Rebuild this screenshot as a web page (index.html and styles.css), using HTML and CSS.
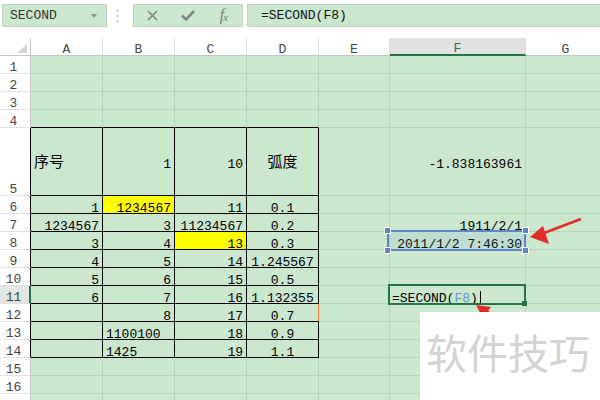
FILE: index.html
```html
<!DOCTYPE html>
<html lang="zh">
<head>
<meta charset="utf-8">
<title>SECOND</title>
<link rel="stylesheet" href="styles.css">
</head>
<body>
<div class="app">
  <div class="toolbar">
    <div class="namebox"><span>SECOND</span>
      <svg class="caretdown" width="6" height="4" viewBox="0 0 6 4"><path d="M0 0H6L3 4Z" fill="#8f8f8f"/></svg>
    </div>
    <div class="dots">
      <svg width="3" height="12" viewBox="0 0 3 12"><rect x="0.5" y="0" width="2" height="2" fill="#c4c4c4"/><rect x="0.5" y="5" width="2" height="2" fill="#c4c4c4"/><rect x="0.5" y="10" width="2" height="2" fill="#c4c4c4"/></svg>
    </div>
    <div class="btns">
      <span class="btn"><svg width="11" height="11" viewBox="0 0 11 11"><path d="M1 1L10 10M10 1L1 10" stroke="#858585" stroke-width="1.7" fill="none"/></svg></span>
      <span class="btn"><svg width="14" height="11" viewBox="0 0 14 11"><path d="M1 5.5L5 9.5L13 1" stroke="#858585" stroke-width="2.6" fill="none"/></svg></span>
      <span class="btn fx"><i>f</i><i class="sub">x</i></span>
    </div>
    <div class="fbar">=SECOND(F8)</div>
  </div>

  <div class="sheet">
    <div class="ch corner"><svg width="10" height="9" viewBox="0 0 10 9"><path d="M10 0V9H0Z" fill="#d6d6d6"/></svg></div>
    <div class="ch">A</div><div class="ch">B</div><div class="ch">C</div><div class="ch">D</div><div class="ch">E</div><div class="ch hl">F</div><div class="ch">G</div>

    <div class="rh">1</div><div class="c"></div><div class="c"></div><div class="c"></div><div class="c"></div><div class="c"></div><div class="c"></div><div class="c"></div>
    <div class="rh">2</div><div class="c"></div><div class="c"></div><div class="c"></div><div class="c"></div><div class="c"></div><div class="c"></div><div class="c"></div>
    <div class="rh">3</div><div class="c"></div><div class="c"></div><div class="c"></div><div class="c"></div><div class="c"></div><div class="c"></div><div class="c"></div>
    <div class="rh">4</div><div class="c tb"></div><div class="c tb"></div><div class="c tb"></div><div class="c tb"></div><div class="c"></div><div class="c"></div><div class="c"></div>

    <div class="rh tl">5</div><div class="c t tall l cjk">序号</div><div class="c t tall r">1</div><div class="c t tall r">10</div><div class="c t tall m cjk">弧度</div><div class="c tall"></div><div class="c tall r">-1.838163961</div><div class="c tall"></div>

    <div class="rh tl">6</div><div class="c t r">1</div><div class="c t r y">1234567</div><div class="c t r">11</div><div class="c t m">0.1</div><div class="c"></div><div class="c"></div><div class="c"></div>
    <div class="rh tl">7</div><div class="c t r">1234567</div><div class="c t r">3</div><div class="c t r">11234567</div><div class="c t m">0.2</div><div class="c"></div><div class="c r">1911/2/1</div><div class="c"></div>
    <div class="rh tl">8</div><div class="c t r">3</div><div class="c t r">4</div><div class="c t r y">13</div><div class="c t m">0.3</div><div class="c"></div><div class="c r">2011/1/2 7:46:30</div><div class="c"></div>
    <div class="rh tl">9</div><div class="c t r">4</div><div class="c t r">5</div><div class="c t r">14</div><div class="c t m">1.245567</div><div class="c"></div><div class="c"></div><div class="c"></div>
    <div class="rh tl">10</div><div class="c t r">5</div><div class="c t r">6</div><div class="c t r">15</div><div class="c t m">0.5</div><div class="c"></div><div class="c"></div><div class="c"></div>
    <div class="rh tl hl">11</div><div class="c t r">6</div><div class="c t r">7</div><div class="c t r">16</div><div class="c t m">1.132355</div><div class="c"></div><div class="c l edit">=SECOND(<span class="ref">F8</span>)<span class="caret"></span></div><div class="c"></div>
    <div class="rh tl">12</div><div class="c t"></div><div class="c t r">8</div><div class="c t r">17</div><div class="c t m mark">0.7</div><div class="c"></div><div class="c"></div><div class="c"></div>
    <div class="rh tl">13</div><div class="c t"></div><div class="c t l">1100100</div><div class="c t r">18</div><div class="c t m">0.9</div><div class="c"></div><div class="c"></div><div class="c"></div>
    <div class="rh tl">14</div><div class="c t"></div><div class="c t l">1425</div><div class="c t r">19</div><div class="c t m">1.1</div><div class="c"></div><div class="c"></div><div class="c"></div>

    <div class="rh">15</div><div class="c"></div><div class="c"></div><div class="c"></div><div class="c"></div><div class="c"></div><div class="c"></div><div class="c"></div>
    <div class="rh">16</div><div class="c"></div><div class="c"></div><div class="c"></div><div class="c"></div><div class="c"></div><div class="c"></div><div class="c"></div>
    <div class="rh">17</div><div class="c"></div><div class="c"></div><div class="c"></div><div class="c"></div><div class="c"></div><div class="c"></div><div class="c"></div>
  </div>

  <div class="selbox">
    <span class="hd h1"></span><span class="hd h2"></span><span class="hd h3"></span><span class="hd h4"></span>
  </div>
  <div class="editbox"><span class="fill"></span></div>

  <svg class="arrows" width="600" height="400" viewBox="0 0 600 400">
    <path d="M581 219L544 233" stroke="#e12b2b" stroke-width="2.6" fill="none"/>
    <path d="M530 237L543 226L549 244Z" fill="#e12b2b"/>
    <path d="M476 305L491 307L483 318Z" fill="#e12b2b"/>
    <path d="M486 311L520 332" stroke="#e12b2b" stroke-width="2.6" fill="none"/>
  </svg>

  <div class="watermark">软件技巧</div>
</div>
</body>
</html>
```

FILE: styles.css
```css
html, body {
  margin: 0;
  padding: 0;
  background: #ffffff;
}

body {
  font-family: "Liberation Mono", "DejaVu Sans Mono", monospace;
  font-size: 13px;
  color: #000;
  overflow: hidden;
}

.app {
  position: relative;
  width: 600px;
  height: 400px;
  overflow: hidden;
  background: #ffffff;
}

/* ---------- toolbar ---------- */
.toolbar {
  display: flex;
  align-items: center;
  height: 38px;
  box-sizing: border-box;
  padding: 4px 0 11px 2px;
}

.namebox {
  width: 105px;
  height: 23px;
  box-sizing: border-box;
  border: 1px solid #c4d2c6;
  background: #cbe8ce;
  display: flex;
  align-items: center;
  justify-content: space-between;
  padding: 0 9px 0 7px;
  color: #333;
}

.dots {
  width: 26px;
  height: 23px;
  display: flex;
  align-items: center;
  padding-left: 9px;
  box-sizing: border-box;
}

.btns {
  width: 110px;
  height: 23px;
  box-sizing: border-box;
  border: 1px solid #c4d2c6;
  background: #cbe8ce;
  display: flex;
  align-items: center;
}

.btn {
  width: 36px;
  height: 21px;
  display: flex;
  align-items: center;
  justify-content: center;
}

.fx {
  font-family: "Liberation Serif", serif;
  font-style: italic;
  color: #7c7c7c;
  font-size: 16px;
  line-height: 16px;
  padding-bottom: 2px;
  box-sizing: border-box;
}

.fx i { font-style: italic; }
.fx .sub { font-size: 11px; margin-top: 5px; margin-left: -1px; }

.fbar {
  flex: 1;
  height: 23px;
  box-sizing: border-box;
  margin-left: 4px;
  margin-right: -2px;
  border: 1px solid #c4d2c6;
  background: #cbe8ce;
  display: flex;
  align-items: center;
  padding-left: 13px;
  color: #111;
}

/* ---------- sheet grid ---------- */
.sheet {
  display: grid;
  grid-template-columns: 31px 72px 72px 72px 72px 71px 136px 80px;
  grid-template-rows: 18px 18px 18px 18px 18px 68px repeat(12, 18px);
}

.ch, .rh, .c {
  box-sizing: border-box;
  display: flex;
  white-space: nowrap;
  overflow: visible;
}

.ch {
  background: #ffffff;
  border-right: 1px solid #dcdcdc;
  border-bottom: 1px solid #c6c6c6;
  align-items: flex-end;
  justify-content: center;
  line-height: 11px;
  color: #444;
}

.ch.corner {
  justify-content: flex-end;
  align-items: flex-end;
  padding: 0 3px 2px 0;
  border-right-color: #c6c6c6;
}

.ch.hl {
  background: #e1e1e1;
  border-bottom: 2px solid #217346;
  color: #2f6844;
}

.rh {
  background: #ffffff;
  border-right: 1px solid #c6c6c6;
  border-bottom: 1px solid #e2e2e2;
  align-items: flex-end;
  justify-content: center;
  padding-right: 3px;
  line-height: 11px;
  color: #444;
}

.rh.tl { border-right-color: #000; }

.rh.hl {
  background: #e4e4e4;
  border-right: 2px solid #217346;
  padding-right: 2px;
  color: #2f4f3c;
}

.c {
  background: #cbe8ce;
  border-right: 1px solid #b7d3ba;
  border-bottom: 1px solid #b7d3ba;
  align-items: flex-end;
  line-height: 9px;
}

.c.tall {
  align-items: center;
  line-height: 17px;
  padding-top: 6px;
}

.c.cjk {
  font-family: "Noto Sans CJK SC", sans-serif;
  font-size: 15px;
  padding-top: 0;
  padding-bottom: 3px;
}

.c.t {
  border-right-color: #000;
  border-bottom-color: #000;
}

.c.tb { border-bottom-color: #000; }

.c.mark { border-right-color: #ef7a3c; }

.c.r { justify-content: flex-end; padding-right: 3px; }
.c.l { justify-content: flex-start; padding-left: 3px; }
.c.m { justify-content: center; }
.c.y { background: #ffff00; }

.c.edit { padding-left: 2px; }

.ref { color: #5f97cf; }

.caret {
  display: inline-block;
  width: 1px;
  height: 15px;
  background: #000;
  margin-left: 2px;
  margin-bottom: -3px;
}

/* ---------- overlays ---------- */
.selbox {
  position: absolute;
  left: 387px;
  top: 230px;
  width: 139px;
  height: 21px;
  box-sizing: border-box;
  border: 2px solid #5a87cc;
  background: rgba(110, 150, 220, 0.12);
}

.hd {
  position: absolute;
  width: 5px;
  height: 5px;
  background: #5a87cc;
  border: 1px solid #ffffff;
}

.h1 { left: -5px; top: -5px; }
.h2 { right: -5px; top: -5px; }
.h3 { left: -5px; bottom: -5px; }
.h4 { right: -5px; bottom: -5px; }

.editbox {
  position: absolute;
  left: 388px;
  top: 284px;
  width: 138px;
  height: 21px;
  box-sizing: border-box;
  border: 2px solid #217346;
}

.editbox .fill {
  position: absolute;
  right: -3px;
  bottom: -3px;
  width: 5px;
  height: 5px;
  background: #217346;
}

.arrows {
  position: absolute;
  left: 0;
  top: 0;
  pointer-events: none;
}

.watermark {
  position: absolute;
  left: 420px;
  top: 312px;
  width: 180px;
  height: 88px;
  box-sizing: border-box;
  background: #ffffff;
  padding: 19px 0 0 6px;
  font-family: "Noto Sans CJK SC", sans-serif;
  font-size: 41px;
  line-height: 41px;
  color: #d3d3d3;
  white-space: nowrap;
}
```
